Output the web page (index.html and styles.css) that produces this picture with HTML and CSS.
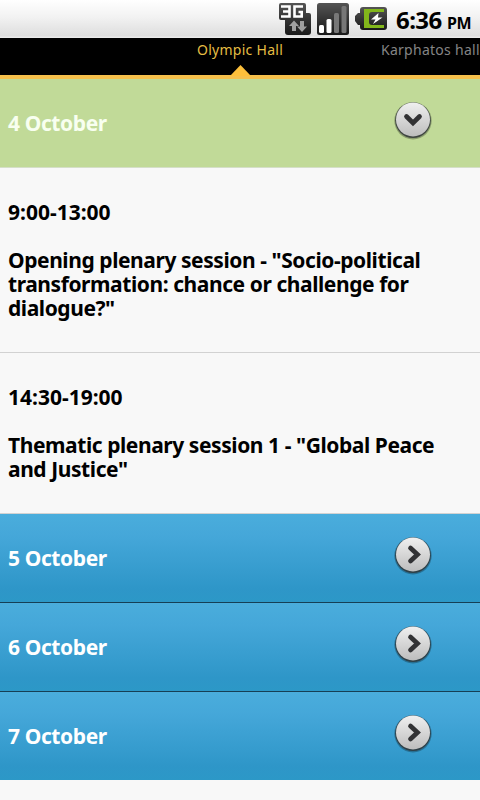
FILE: index.html
```html
<!DOCTYPE html>
<html lang="en">
<head>
<meta charset="utf-8">
<title>Programme</title>
<link rel="stylesheet" href="styles.css">
</head>
<body>
<svg class="defs" width="0" height="0" aria-hidden="true">
  <defs>
    <linearGradient id="disc" x1="0" y1="0" x2="0" y2="1"><stop offset="0" stop-color="#f0f0f0"/><stop offset="1" stop-color="#bdbdbd"/></linearGradient>
    <linearGradient id="dark" x1="0" y1="0" x2="0" y2="1"><stop offset="0" stop-color="#555"/><stop offset=".5" stop-color="#353535"/><stop offset="1" stop-color="#191919"/></linearGradient>
    <symbol id="knob" viewBox="0 0 44 44">
      <circle cx="22" cy="22.7" r="18.7" fill="#000" opacity=".28"/>
      <circle cx="22" cy="22.2" r="17.8" fill="#303638" opacity=".85"/>
      <circle cx="22" cy="21.4" r="17" fill="url(#disc)"/>
    </symbol>
  </defs>
</svg>
<header class="status">
  <svg class="network" width="32" height="32" viewBox="0 0 32 32">
    <path d="M2 0H25Q27 0 27 2V10H30Q32 10 32 12V29Q32 32 29 32H9Q6 32 6 29V17H2Q0 17 0 15V2Q0 0 2 0Z" fill="url(#dark)"/>
    <path d="M2 3.5H10.5V13.5H2M4 8.5H10.5M24 3.5H15.5V13.5H22.7V9H19.5" fill="none" stroke="#fff" stroke-width="2.6"/>
    <path d="M15 17.5L20 23H17V28H13V23H10Z" fill="#a0a0a0"/><path d="M21 18H25V23.5H28L23 29L18 23.5H21Z" fill="#a0a0a0"/>
  </svg>
  <svg class="signal" width="32" height="32" viewBox="0 0 32 32">
    <rect width="32" height="32" rx="2.5" fill="url(#dark)"/>
    <rect x="2" y="22" width="5" height="8" rx="1.5" fill="#fff"/><rect x="9.5" y="16" width="5" height="14" rx="1.5" fill="#fff"/>
    <rect x="17" y="10" width="5" height="20" rx="1.5" fill="#777"/><rect x="24.5" y="3" width="5" height="27" rx="1.5" fill="#777"/>
  </svg>
  <svg class="battery" width="32" height="24" viewBox="0 0 32 24">
    <path d="M8 0H29Q32 0 32 3V20Q32 23 29 23H8Q5 23 5 20V18H3L0 14V9L3 6H5V3Q5 0 8 0Z" fill="url(#dark)"/>
    <path d="M9 2H29V5H17Q14 5 14 8V15Q14 18 17 18H29V21H9Z" fill="#82b71b"/>
    <path d="M23.5 6L16 12.5H20.5L18 17L27.5 10.5H23Z" fill="#fff"/>
  </svg>
  <div class="clock"><span class="time">6:36</span><span class="pm">PM</span></div>
</header>
<nav class="tabs">
  <span class="tab current">Olympic Hall</span>
  <span class="tab next">Karphatos hall</span>
  <i class="marker"></i>
</nav>
<main>
  <section class="day open"><h2>4 October</h2>
    <svg width="44" height="44" viewBox="0 0 44 44"><use href="#knob"/><path d="M15.5 18.5L22 25L28.5 18.5" class="chevron"/></svg>
  </section>
  <article class="session first"><h3 class="hours">9:00-13:00</h3>
    <h3>Opening plenary session - "Socio-political<br>transformation: chance or challenge for<br>dialogue?"</h3>
  </article>
  <article class="session second"><h3 class="hours">14:30-19:00</h3>
    <h3>Thematic plenary session 1 - "Global Peace<br>and Justice"</h3>
  </article>
  <section class="day"><h2>5 October</h2>
    <svg width="44" height="44" viewBox="0 0 44 44"><use href="#knob"/><path d="M19.5 15L26.5 21.5L19.5 28" class="chevron"/></svg>
  </section>
  <section class="day"><h2>6 October</h2>
    <svg width="44" height="44" viewBox="0 0 44 44"><use href="#knob"/><path d="M19.5 15L26.5 21.5L19.5 28" class="chevron"/></svg>
  </section>
  <section class="day last"><h2>7 October</h2>
    <svg width="44" height="44" viewBox="0 0 44 44"><use href="#knob"/><path d="M19.5 15L26.5 21.5L19.5 28" class="chevron"/></svg>
  </section>
</main>
</body>
</html>
```
FILE: styles.css
```css
* { box-sizing: border-box; }
body { margin: 0; width: 480px; height: 800px; overflow: hidden; background: #f8f8f8; color: #000; font-family: "Noto Sans", "Open Sans", sans-serif; }
.defs { position: absolute; }
.status { height: 38px; display: flex; padding: 3px 0 0 279px; background: linear-gradient(#fff, #f2f2f2 45%, #dedede 94%, #eee); }
.status svg { flex: none; }
.signal { margin-left: 6px; }
.battery { margin: 4px 0 0 6px; }
.clock { display: flex; align-items: baseline; margin-left: 9px; height: 33px; line-height: 33px; font-weight: 700; white-space: nowrap; }
.time { font-size: 24px; letter-spacing: -.6px; width: 51px; }
.pm { font-size: 16px; letter-spacing: -.4px; }
.tabs { position: relative; height: 41px; display: flex; background: #000; border-bottom: 4px solid #f5c04b; padding-left: 197px; font-size: 14px; line-height: 24px; letter-spacing: .27px; white-space: nowrap; }
.tab { width: 184px; flex: none; }
.current { color: #e5bd43; }
.next { color: #858585; width: 99px; }
.marker { position: absolute; left: 230px; top: 27px; width: 21px; height: 11px; background: #fcbf3b; clip-path: polygon(50% 0, 100% 100%, 0 100%); }
.day { height: 89px; display: flex; justify-content: space-between; padding: 19px 45px 0 8px; background: linear-gradient(#4aaddc, #45a7d9 25%, #2e96c8 85%, #2c98c7); border-bottom: 1px solid #163f55; color: #fff; }
.open { background: #c1da98; border-color: #d5dfc8; }
.last { height: 88px; border-bottom: 0; }
h2, h3 { margin: 0; font-size: 21px; line-height: 24px; font-weight: 700; letter-spacing: -.43px; white-space: nowrap; }
h2 { padding-top: 13px; letter-spacing: -.4px; }
.open h2 { color: #f8fff0; }
.chevron { fill: none; stroke: #323234; stroke-width: 4.7; stroke-linecap: round; stroke-linejoin: miter; }
.session { padding: 32px 8px 0; border-bottom: 1px solid #d2d2d2; }
.first { height: 185px; }
.second { height: 161px; }
.hours { margin-bottom: 24px; letter-spacing: 0; }
```
